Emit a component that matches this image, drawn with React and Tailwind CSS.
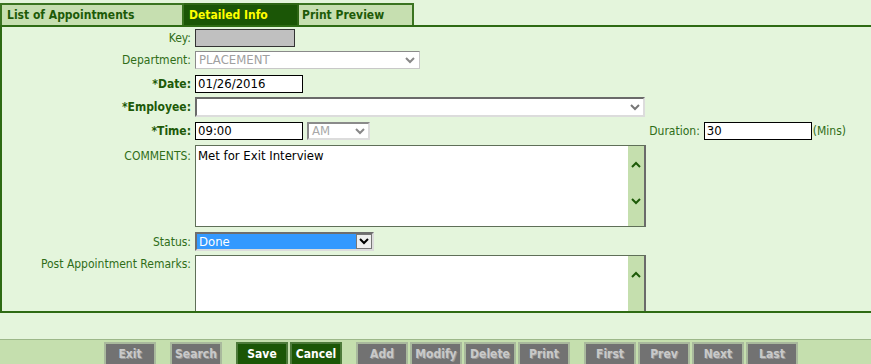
import React from "react";

const font = { fontFamily: '"DejaVu Sans Condensed", "DejaVu Sans", sans-serif' };

function Chevron({ up = false, className = "" }) {
  return (
    <svg width="10" height="7" viewBox="0 0 10 7" className={className}>
      <path
        d={up ? "M1 6 L5 2 L9 6" : "M1 1 L5 5 L9 1"}
        fill="none"
        stroke="currentColor"
        strokeWidth="2"
      />
    </svg>
  );
}

function Label({ children, bold = false, top = false }) {
  return (
    <div
      className={`w-[193px] shrink-0 pr-[4px] text-right text-[12px] ${
        bold ? "font-bold text-[#1d5a08]" : "text-[#2f6d18]"
      } ${top ? "self-start" : ""}`}
    >
      {children}
    </div>
  );
}

function TextArea({ value, height, showDown = true }) {
  return (
    <div
      className="flex w-[451px] border border-[#5f6f58] border-r-2 border-r-[#6a6a6a] bg-white"
      style={{ height }}
    >
      <div className="flex-1 px-[2px] pt-[2px] text-[13px] leading-[16px] text-black">{value}</div>
      <div className="flex w-[16px] flex-col items-center bg-[#c5dfae] text-[#1d5a08]">
        <Chevron up className="mt-[15px]" />
        {showDown && <Chevron className="mt-[30px]" />}
      </div>
    </div>
  );
}

function Btn({ label, active = false }) {
  return (
    <div
      className={`flex h-[24px] w-[52px] items-center justify-center border-2 text-[12px] font-bold ${
        active
          ? "border-[#4d7a3a] bg-[#1b5606] text-white"
          : "border-[#a9b99d] bg-[#727272] text-[#c9c9c9] [text-shadow:1px_1px_0_#9a9a9a]"
      }`}
    >
      {label}
    </div>
  );
}

export default function App() {
  return (
    <div className="h-[364px] w-[871px] overflow-hidden bg-[#e4f5dc]" style={font}>
      {/* tabs */}
      <div className="flex h-[25px] items-end pt-[3px]">
        <div className="flex h-[22px] w-[184px] items-center border-2 border-b-0 border-[#3a7420] bg-[#c6dfb0] pl-[5px] text-[12px] font-bold text-[#1d5a08]">
          List of Appointments
        </div>
        <div className="flex h-[22px] w-[115px] items-center border-2 border-b-0 border-l-0 border-[#2e6614] bg-[#1b5606] pl-[5px] text-[12px] font-bold text-[#ffff00]">
          Detailed Info
        </div>
        <div className="flex h-[22px] w-[115px] items-center border-2 border-b-0 border-l-0 border-[#3a7420] bg-[#c6dfb0] pl-[3px] text-[12px] font-bold text-[#1d5a08]">
          Print Preview
        </div>
      </div>

      {/* panel */}
      <div className="h-[288px] overflow-hidden border-2 border-r-0 border-[#2e6b14]">
        <div className="mt-[2px] flex h-[18px] items-center">
          <Label>Key:</Label>
          <div className="h-[18px] w-[100px] border border-[#333] bg-[#c0c0c0]" />
        </div>

        <div className="mt-[4px] flex h-[18px] items-center">
          <Label>Department:</Label>
          <div className="flex h-[18px] w-[225px] items-center justify-between border border-[#c8c8c8] border-t-[#8a8a8a] border-l-[#8a8a8a] bg-white pl-[3px] pr-[4px] text-[13px] text-[#a0a0a0]">
            <span>PLACEMENT</span>
            <Chevron className="text-[#888]" />
          </div>
        </div>

        <div className="mt-[6px] flex h-[18px] items-center">
          <Label bold>*Date:</Label>
          <div className="flex h-[18px] w-[108px] items-center border border-black bg-white px-[2px] text-[13px] text-black">
            01/26/2016
          </div>
        </div>

        <div className="mt-[4px] flex h-[20px] items-center">
          <Label bold>*Employee:</Label>
          <div className="flex h-[20px] w-[450px] items-center justify-end border-2 border-[#6a6a6a] border-r-[#dcdcdc] border-b-[#dcdcdc] bg-white pr-[3px]">
            <Chevron className="text-[#777]" />
          </div>
        </div>

        <div className="mt-[5px] flex h-[18px] items-center">
          <Label bold>*Time:</Label>
          <div className="flex h-[18px] w-[108px] items-center border border-black bg-white px-[2px] text-[13px] text-black">
            09:00
          </div>
          <div className="ml-[4px] flex h-[18px] w-[63px] items-center justify-between border-2 border-[#8a8a8a] border-r-[#dcdcdc] border-b-[#dcdcdc] bg-white pl-[3px] pr-[3px] text-[13px] text-[#a8a8a8]">
            <span>AM</span>
            <Chevron className="text-[#888]" />
          </div>
          <div className="ml-auto text-[12px] text-[#2f6d18]">Duration:</div>
          <div className="ml-[4px] flex h-[18px] w-[108px] items-center border border-black bg-white px-[2px] text-[13px] text-black">
            30
          </div>
          <div className="mr-[25px] ml-[1px] text-[12px] text-[#2f6d18]">(Mins)</div>
        </div>

        <div className="mt-[5px] flex items-start">
          <Label top>
            <div className="pt-[2px]">COMMENTS:</div>
          </Label>
          <TextArea value="Met for Exit Interview" height={82} />
        </div>

        <div className="mt-[5px] flex h-[19px] items-center">
          <Label>Status:</Label>
          <div className="flex h-[19px] w-[179px] border-2 border-[#6e6e6e] border-r-[#dcdcdc] border-b-[#dcdcdc] bg-white">
            <div className="flex flex-1 items-center bg-[#3399ff] pl-[2px] text-[13px] text-white">Done</div>
            <div className="flex w-[16px] items-center justify-center border border-[#777] bg-[#efefef] text-black">
              <Chevron />
            </div>
          </div>
        </div>

        <div className="mt-[4px] flex items-start">
          <Label top>Post Appointment Remarks:</Label>
          <TextArea value="" height={70} showDown={false} />
        </div>
      </div>

      {/* spacer strip */}
      <div className="h-[27px] border-b border-[#9cb889]" />

      {/* button bar */}
      <div className="flex h-[40px] bg-[#c5dfae] pt-[2px] pl-[104px]">
        <Btn label="Exit" />
        <div className="ml-[14px]">
          <Btn label="Search" />
        </div>
        <div className="ml-[14px] flex gap-[2px]">
          <Btn label="Save" active />
          <Btn label="Cancel" active />
        </div>
        <div className="ml-[14px] flex gap-[2px]">
          <Btn label="Add" />
          <Btn label="Modify" />
          <Btn label="Delete" />
          <Btn label="Print" />
        </div>
        <div className="ml-[14px] flex gap-[2px]">
          <Btn label="First" />
          <Btn label="Prev" />
          <Btn label="Next" />
          <Btn label="Last" />
        </div>
      </div>
    </div>
  );
}
